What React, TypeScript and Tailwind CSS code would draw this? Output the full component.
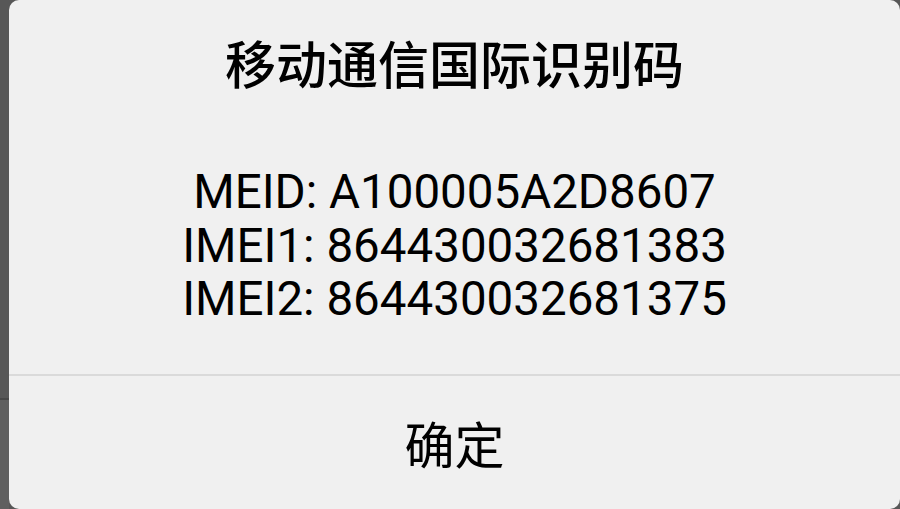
export default function App() {
  return (
    <div className="flex h-[509px] w-[900px] overflow-hidden bg-[#575757]">
      {/* dimmed background behind the dialog */}
      <div className="flex w-[9px] flex-col">
        <div className="h-[398px] bg-[#575757]" />
        <div className="h-[2px] bg-[#484848]" />
        <div className="flex-1 bg-[#5f5f5f]" />
      </div>

      <div
        className="flex flex-1 flex-col rounded-[10px] bg-[#f0f0f0] text-black"
        style={{ fontFamily: 'Roboto, "Noto Sans CJK SC", sans-serif' }}
      >
        <div className="flex h-[374px] flex-col items-center">
          <h1 className="mt-[37px] text-[51px] leading-[60px] font-medium">移动通信国际识别码</h1>
          <div className="mt-[69px] flex flex-col items-center text-[47.5px] leading-[53.5px]">
            <p>MEID: A100005A2D8607</p>
            <p>IMEI1: 864430032681383</p>
            <p>IMEI2: 864430032681375</p>
          </div>
        </div>
        <div className="h-[2px] bg-[#dadada]" />
        <button className="flex flex-1 items-center justify-center pt-[9px] text-[50px]">确定</button>
      </div>
    </div>
  );
}
